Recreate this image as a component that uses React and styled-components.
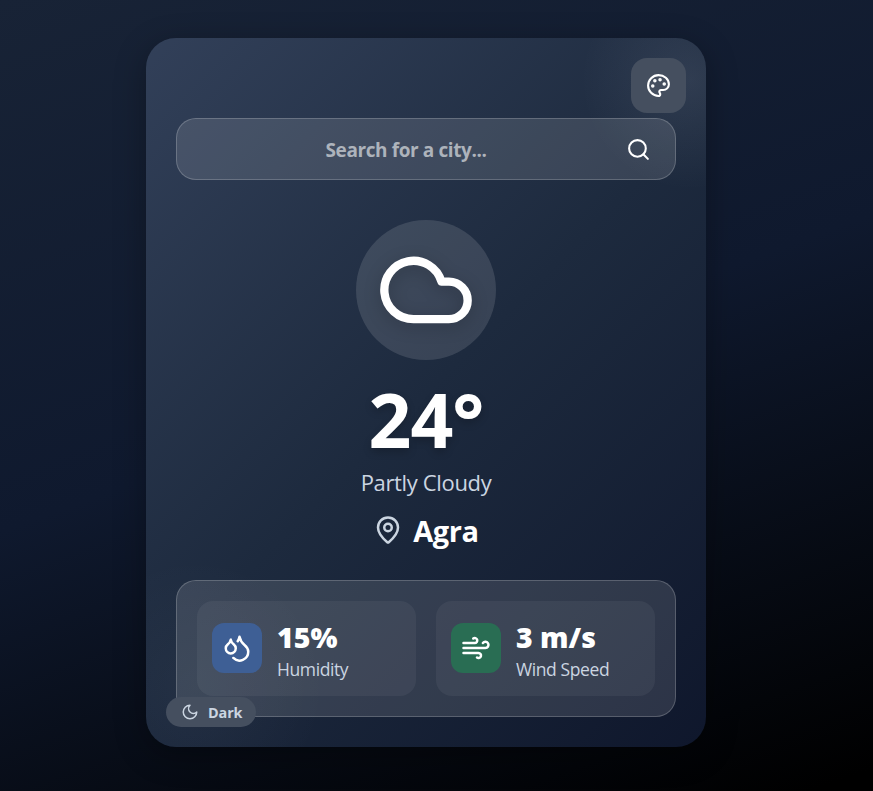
import React from "react";
import styled, { createGlobalStyle } from "styled-components";
import { Search, Cloud, MapPin, Droplets, Wind } from "lucide-react";

const GlobalStyle = createGlobalStyle`
  * { box-sizing: border-box; }
  body {
    margin: 0;
    font-family: "Segoe UI", "Open Sans", "Noto Sans", sans-serif;
    color: #fff;
  }
`;

const Page = styled.main`
  height: 791px;
  padding: 38px 167px 0 146px;
  overflow: hidden;
  background: linear-gradient(160deg, #182336 0%, #0f192e 48%, #000 98%);
`;

const Card = styled.section`
  position: relative;
  display: flex;
  flex-direction: column;
  align-items: center;
  height: 709px;
  padding: 80px 30px 30px;
  border-radius: 30px;
  overflow: hidden;
  background:
    radial-gradient(circle 110px at 545px 42px, rgba(226, 232, 255, 0.09), transparent),
    radial-gradient(circle 130px at 50px 650px, rgba(226, 232, 255, 0.04), transparent),
    linear-gradient(135deg, #324059 0%, #1d2a3e 50%, #0f172c 100%);
`;

const CardShadow = styled.div`
  border-radius: 30px;
  box-shadow: 0 8px 32px rgba(0, 0, 0, 0.3);
`;

const ThemeButton = styled.button`
  position: absolute;
  top: 20px;
  right: 20px;
  display: grid;
  place-items: center;
  width: 55px;
  height: 55px;
  padding: 0;
  border: 0;
  border-radius: 16px;
  color: #fff;
  background: #454f5f;
`;

const LineIcon = styled.svg`
  fill: none;
  stroke: currentColor;
  stroke-width: 2;
  stroke-linecap: round;
  stroke-linejoin: round;
`;

const SearchBar = styled.form`
  display: flex;
  align-items: center;
  flex: none;
  width: 500px;
  height: 62px;
  padding-right: 24px;
  border: 1px solid rgba(255, 255, 255, 0.2);
  border-radius: 20px;
  background: rgba(255, 255, 255, 0.12);
`;

const SearchInput = styled.input`
  flex: 1;
  min-width: 0;
  padding: 2px 0 0 9px;
  border: 0;
  outline: 0;
  background: none;
  color: #fff;
  font: 700 19px "Segoe UI", "Open Sans", sans-serif;
  letter-spacing: -0.4px;
  text-align: center;
  &::placeholder { color: #adb3bb; opacity: 1; }
`;

const SearchButton = styled.button`
  display: flex;
  padding: 0;
  border: 0;
  background: none;
  color: #fff;
`;

const Orb = styled.div`
  display: grid;
  place-items: center;
  flex: none;
  width: 140px;
  height: 140px;
  margin-top: 40px;
  border-radius: 50%;
  background: rgba(255, 255, 255, 0.12);
  svg { filter: drop-shadow(0 4px 8px rgba(0, 0, 0, 0.2)); }
`;

const Temperature = styled.h1`
  margin: 17px 0 0;
  font-size: 75px;
  font-weight: 750;
  line-height: 84px;
  letter-spacing: -1px;
  text-shadow: 0 4px 8px rgba(0, 0, 0, 0.2);
`;

const Condition = styled.p`
  margin: 6px 0 0;
  color: #cbd5e1;
  font-size: 22px;
  line-height: 30px;
  letter-spacing: -0.35px;
`;

const Place = styled.div`
  display: flex;
  align-items: center;
  gap: 10px;
  height: 40px;
  margin-top: 14px;
  color: #cbd5e1;
  svg { margin-bottom: 3px; }
`;

const City = styled.h2`
  margin: 0;
  color: #fff;
  font-size: 29px;
  font-weight: 700;
  line-height: 40px;
  letter-spacing: -0.4px;
`;

const Stats = styled.div`
  display: grid;
  grid-template-columns: 1fr 1fr;
  gap: 20px;
  width: 500px;
  height: 137px;
  margin-top: auto;
  padding: 20px;
  border: 1px solid rgba(255, 255, 255, 0.2);
  border-radius: 20px;
  background: rgba(255, 255, 255, 0.12);
`;

const Stat = styled.div`
  display: flex;
  align-items: flex-start;
  gap: 15px;
  padding: 22px 15px 0;
  border-radius: 16px;
  background: rgba(255, 255, 255, 0.05);
`;

const StatIcon = styled.div`
  display: grid;
  place-items: center;
  flex: none;
  width: 50px;
  height: 50px;
  border-radius: 12px;
  background: ${(p) => p.$color};
`;

const StatValue = styled.div`
  margin-top: -3px;
  font-size: 28.5px;
  font-weight: 800;
  line-height: 34px;
  letter-spacing: 0;
`;

const StatLabel = styled.div`
  color: #cbd5e1;
  font-size: 17.5px;
  line-height: 24px;
  letter-spacing: -0.4px;
  margin-top: 3px;
`;

const ModeBadge = styled.div`
  position: absolute;
  left: 20px;
  bottom: 20px;
  display: flex;
  align-items: center;
  gap: 9px;
  width: 90px;
  height: 30px;
  padding-left: 15px;
  border-radius: 15px;
  background: #454f5f;
  color: #cbd5e1;
  font-size: 14.4px;
  font-weight: 700;
  letter-spacing: -0.1px;
`;

function PaletteIcon() {
  return (
    <LineIcon width="25" height="25" viewBox="0 0 24 24">
      <circle cx="13.5" cy="6.5" r=".7" fill="currentColor" />
      <circle cx="17.5" cy="10.5" r=".7" fill="currentColor" />
      <circle cx="8.5" cy="7.5" r=".7" fill="currentColor" />
      <circle cx="6.5" cy="12.5" r=".7" fill="currentColor" />
      <path d="M12 2C6.5 2 2 6.5 2 12s4.5 10 10 10c.926 0 1.648-.746 1.648-1.688 0-.437-.18-.835-.437-1.125-.29-.289-.438-.652-.438-1.125a1.64 1.64 0 0 1 1.668-1.668h1.996c3.051 0 5.555-2.503 5.555-5.554C21.965 6.012 17.461 2 12 2z" />
    </LineIcon>
  );
}

function MoonIcon() {
  return (
    <LineIcon width="18" height="18" viewBox="0 0 24 24">
      <path d="M12 3a6 6 0 0 0 9 9 9 9 0 1 1-9-9Z" />
    </LineIcon>
  );
}

const stats = [
  { icon: Droplets, color: "#3e5f95", value: "15%", label: "Humidity" },
  { icon: Wind, color: "#296d53", value: "3 m/s", label: "Wind Speed" },
];

export default function App() {
  return (
    <>
      <GlobalStyle />
      <Page>
        <CardShadow>
          <Card>
            <ThemeButton aria-label="Theme"><PaletteIcon /></ThemeButton>
            <SearchBar>
              <SearchInput placeholder="Search for a city..." />
              <SearchButton type="button" aria-label="Search"><Search size={25} /></SearchButton>
            </SearchBar>
            <Orb><Cloud size={100} /></Orb>
            <Temperature>24°</Temperature>
            <Condition>Partly Cloudy</Condition>
            <Place><MapPin size={30} /><City>Agra</City></Place>
            <Stats>
              {stats.map(({ icon: Icon, color, value, label }) => (
                <Stat key={label}>
                  <StatIcon $color={color}><Icon size={30} /></StatIcon>
                  <div>
                    <StatValue>{value}</StatValue>
                    <StatLabel>{label}</StatLabel>
                  </div>
                </Stat>
              ))}
            </Stats>
            <ModeBadge><MoonIcon />Dark</ModeBadge>
          </Card>
        </CardShadow>
      </Page>
    </>
  );
}
